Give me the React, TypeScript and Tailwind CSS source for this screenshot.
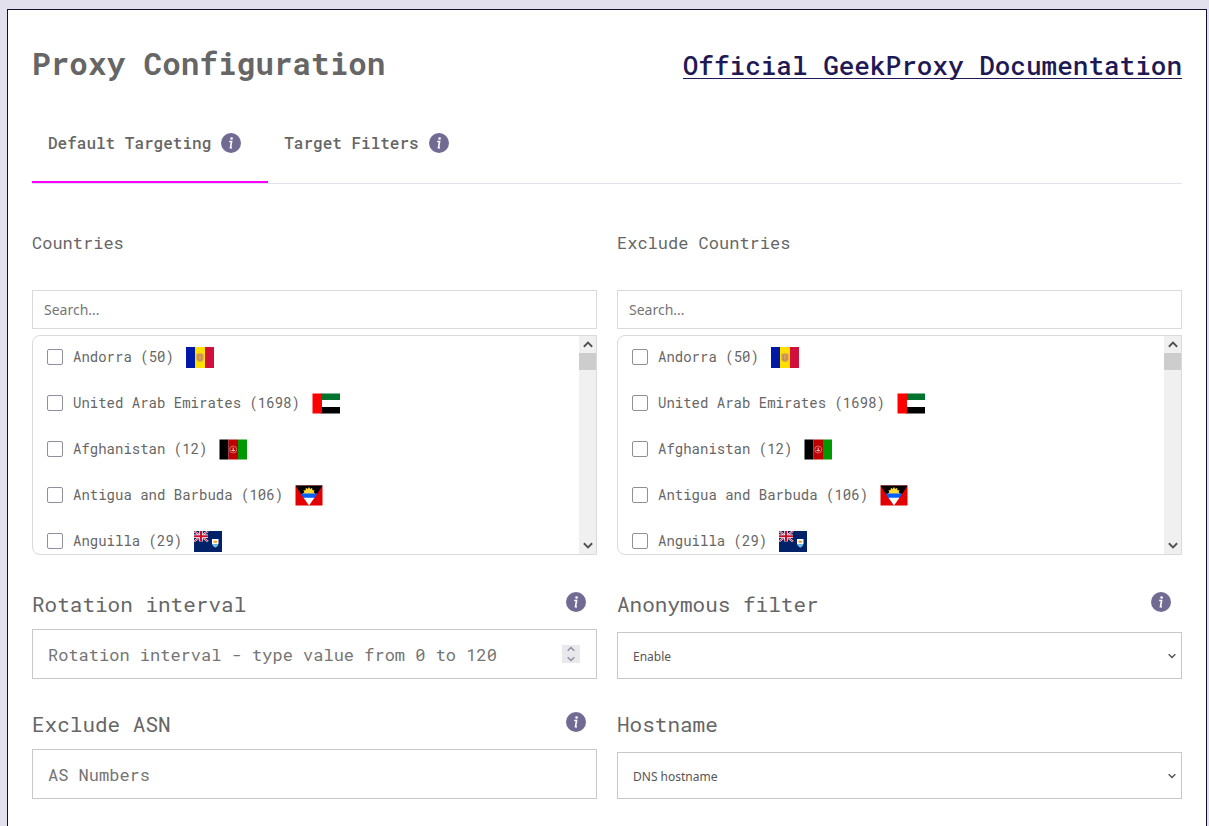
import { ReactNode, useState } from "react";

interface Country {
  name: string;
  count: number;
  flag: ReactNode;
}

const ANTIGUA_RAYS = [0, 30, 60, 90, 120, 150, 180];

const countries: Country[] = [
  {
    name: "Andorra",
    count: 50,
    flag: (
      <>
        <path fill="#0018a8" d="M0 0h9v21H0z" />
        <path fill="#fedf00" d="M9 0h10v21H9z" />
        <path fill="#d0103a" d="M19 0h9v21h-9z" />
        <path fill="#d09a55" d="M10.5 7q3.5-1.5 7 0v5.500q-.5 2-3.500 2.500q-3-.5-3.500-2.500z" />
        <path stroke="#b8743a" d="M12 9h4M12 12h4" />
        <path stroke="#e8b06a" d="M14 8v5" />
      </>
    ),
  },
  {
    name: "United Arab Emirates",
    count: 1698,
    flag: (
      <>
        <path fill="#fff" d="M0 0h28v21H0z" />
        <path fill="#00732f" d="M9 .5h19V7H9z" />
        <path fill="#000" d="M9 14h19v6.5H9z" />
        <path fill="#f00" d="M.5.5H10v20H.5z" />
      </>
    ),
  },
  {
    name: "Afghanistan",
    count: 12,
    flag: (
      <>
        <path fill="#000" d="M.5.5h9v20h-9z" />
        <path fill="#bf0000" d="M9.5.5H19v20H9.5z" />
        <path fill="#090" d="M19 .5h9v20h-9z" />
        <circle cx="14.2" cy="10.5" r="3.5" fill="none" stroke="#d86a6a" />
        <path stroke="#f0c0c0" d="M12.5 11.5H16M14.2 8.5v4" />
      </>
    ),
  },
  {
    name: "Antigua and Barbuda",
    count: 106,
    flag: (
      <>
        <path fill="#e20000" d="M.5.5h27v20H.5z" />
        <path fill="#000" d="M.5.5h27L22 9H6z" />
        <g fill="#ffd83c">
          <circle cx="14" cy="8.5" r="4.8" />
          {ANTIGUA_RAYS.map((angle) => (
            <path key={angle} d="M7.5 8.5L10 7v3z" transform={`rotate(${angle} 14 8.5)`} />
          ))}
        </g>
        <path fill="#0061ff" d="M5.8 8.5h16.5L19.5 13h-11z" />
        <path fill="#fff" d="M8.5 12.800h11L14 20.5z" />
      </>
    ),
  },
  {
    name: "Anguilla",
    count: 29,
    flag: (
      <>
        <path fill="#012169" d="M0 0h28v21H0z" />
        <path stroke="#fff" strokeWidth="2" d="M0 0l14 10.5M14 0L0 10.5" />
        <path stroke="#c8102e" strokeWidth="1" d="M0 0l14 10.5M14 0L0 10.5" />
        <path stroke="#fff" strokeWidth="3.4" d="M7 0v10.5M0 5.2h14" />
        <path stroke="#c8102e" strokeWidth="2" d="M7 0v10.5M0 5.2h14" />
        <path fill="#fff" d="M18 8h6.500v4.500q-.8 3-3.200 4q-2.500-1-3.300-4z" />
        <path fill="#5fb8e4" d="M18.300 13h6q-1 2.500-3 3.300q-2-.8-3-3.300z" />
        <path stroke="#f0a030" strokeWidth="2" d="M19.5 10.7H23" />
      </>
    ),
  },
];

const InfoIcon = () => (
  <svg className="w-5 h-5 shrink-0" viewBox="0 0 20 20" role="img" aria-label="Info">
    <circle cx="10" cy="10" r="10" fill="#716b94" />
    <circle cx="10.6" cy="5.5" r="1.3" fill="#fff" />
    <path d="M8.200 8.500h2.400L9.500 14.700h1.500" fill="none" stroke="#fff" strokeWidth="1.6" />
  </svg>
);

interface ChevronProps {
  up?: boolean;
  className?: string;
}

const Chevron = ({ up, className }: ChevronProps) => (
  <svg className={className} viewBox="0 0 8 6" fill="none" stroke="currentColor" aria-hidden="true">
    <path d={up ? "M.7 4.800L4 1.500l3.300 3.300" : "M.7 1.200L4 4.500l3.300-3.300"} strokeWidth="1.5" />
  </svg>
);

interface CountryListProps {
  id: string;
  title: string;
}

const CountryList = ({ id, title }: CountryListProps) => {
  const [search, setSearch] = useState("");
  const visible = countries.filter((c) => c.name.toLowerCase().includes(search.toLowerCase()));

  return (
    <section>
      <label htmlFor={`${id}-search`} className="block text-[17px] leading-6">
        {title}
      </label>
      <input
        id={`${id}-search`}
        type="text"
        value={search}
        onChange={(e) => setSearch(e.target.value)}
        placeholder="Search..."
        className="block w-full h-[39px] mt-[35px] px-[11px] border border-[#dadada] bg-white font-['Noto_Sans',sans-serif] text-sm placeholder:text-[#757575]"
      />
      <div className="flex h-[220px] mt-1.5 border border-[#dadada] rounded-l-lg overflow-hidden">
        <ul className="flex flex-1 flex-col gap-1 pl-3.5 overflow-hidden">
          {visible.map(({ name, count, flag }) => (
            <li key={name} className="shrink-0">
              <label className="flex items-center h-[42px] text-sm">
                <input
                  type="checkbox"
                  className="w-4 h-4 mr-2.5 appearance-none rounded-xs border border-[#8f8f9d] bg-white checked:bg-[#716b94]"
                />
                {name} ({count})
                <svg className="w-7 h-[21px] ml-3" viewBox="0 0 28 21" aria-hidden="true">
                  {flag}
                </svg>
              </label>
            </li>
          ))}
        </ul>
        {/* Scrollbar */}
        <div className="flex flex-col items-center w-[17px] bg-[#f0f0f0] text-[#505050]" aria-hidden="true">
          <Chevron up className="w-2.5 h-[17px]" />
          <div className="w-full h-[17px] bg-[#cdcdcd]" />
          <Chevron className="w-2.5 h-[17px] mt-auto" />
        </div>
      </div>
    </section>
  );
};

interface FieldProps {
  id: string;
  label: string;
  info?: boolean;
  children: ReactNode;
}

const Field = ({ id, label, info, children }: FieldProps) => (
  <div className="flex flex-col h-[89px]">
    <div className="flex justify-between pr-[11px]">
      <label htmlFor={id} className="text-[21px] leading-7">
        {label}
      </label>
      {info && (
        <span className="mt-0.5">
          <InfoIcon />
        </span>
      )}
    </div>
    <div className="mt-auto">{children}</div>
  </div>
);

interface SelectProps {
  id: string;
  options: string[];
}

const Select = ({ id, options }: SelectProps) => (
  <div className="relative">
    <select
      id={id}
      className="block w-full h-[47px] px-[15px] pt-0.5 appearance-none border border-[#c8c8c8] bg-white font-['Noto_Sans',sans-serif] text-xs text-[#555]"
    >
      {options.map((option) => (
        <option key={option}>{option}</option>
      ))}
    </select>
    <Chevron className="absolute right-1.5 top-5 w-2 h-2 text-[#555]" />
  </div>
);

const tabs = ["Default Targeting", "Target Filters"];

const App = () => {
  const [activeTab, setActiveTab] = useState(tabs[0]);

  return (
    <div className="min-h-screen pt-[9px] pl-[7px] pr-0.5 bg-[#e2e0ed] font-['Roboto_Mono','Liberation_Mono',monospace] text-[#666]">
      <main className="min-h-[calc(100vh-9px)] px-6 pb-7 border border-b-0 border-[#151030] bg-white">
        <header className="flex items-center justify-between pt-[31px]">
          <h1 className="text-[31px] leading-[44px] font-bold">Proxy Configuration</h1>
          <a
            href="#documentation"
            className="mt-1 border-b border-[#1f1a55] font-medium text-[26px] leading-[26px] text-[#1f1a55]"
          >
            Official GeekProxy Documentation
          </a>
        </header>

        <nav className="flex mt-[17px] border-b border-[#e2e0ed]" role="tablist">
          {tabs.map((tab) => (
            <button
              key={tab}
              type="button"
              role="tab"
              aria-selected={tab === activeTab}
              onClick={() => setActiveTab(tab)}
              className={`flex items-center gap-2.5 h-[81px] pt-0.5 pl-4 pr-[27px] border-b-2 text-base font-medium ${
                tab === activeTab ? "border-[#f0f]" : "border-transparent"
              }`}
            >
              {tab}
              <InfoIcon />
            </button>
          ))}
        </nav>

        <form className="grid grid-cols-2 gap-x-5 mt-[47px]">
          <CountryList id="countries" title="Countries" />
          <CountryList id="exclude-countries" title="Exclude Countries" />
          <div className="grid gap-[31px] mt-[35px]">
            <Field id="rotation" label="Rotation interval" info>
              <div className="flex items-center h-[50px] pl-[15px] pr-4 border border-[#c8c8c8]">
                <input
                  id="rotation"
                  type="number"
                  min={0}
                  max={120}
                  placeholder="Rotation interval - type value from 0 to 120"
                  className="flex-1 min-w-0 pt-0.5 outline-none [appearance:textfield] text-[17px] placeholder:text-[#757575]"
                />
                <span
                  className="flex flex-col items-center justify-center gap-1 w-[18px] h-[18px] bg-[#e9e9ed] text-[#8f8f9d]"
                  aria-hidden="true"
                >
                  <Chevron up className="w-2 h-1.5" />
                  <Chevron className="w-2 h-1.5" />
                </span>
              </div>
            </Field>
            <Field id="asn" label="Exclude ASN" info>
              <input
                id="asn"
                type="text"
                placeholder="AS Numbers"
                className="block w-full h-[50px] px-[15px] border border-[#c8c8c8] text-[17px] placeholder:text-[#757575]"
              />
            </Field>
          </div>
          <div className="grid gap-[31px] mt-[35px]">
            <Field id="anonymous" label="Anonymous filter" info>
              <Select id="anonymous" options={["Enable", "Disable"]} />
            </Field>
            <Field id="hostname" label="Hostname">
              <Select id="hostname" options={["DNS hostname", "IP address"]} />
            </Field>
          </div>
        </form>
      </main>
    </div>
  );
};

export default App;
